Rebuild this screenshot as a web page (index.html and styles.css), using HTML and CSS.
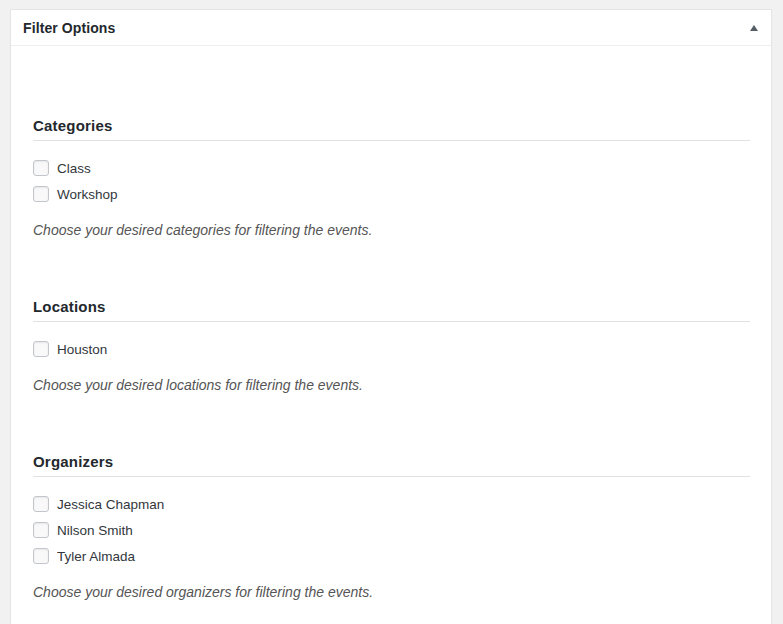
FILE: index.html
```html
<!DOCTYPE html>
<html>
<head>
<meta charset="utf-8">
<link rel="stylesheet" href="styles.css">
</head>
<body>
<div class="postbox">
  <div class="postbox-header">
    <h2 class="postbox-title">Filter Options</h2>
    <span class="toggle-arrow" aria-hidden="true"></span>
  </div>
  <div class="postbox-body">
    <section class="filter-group">
      <h3 class="group-title">Categories</h3>
      <ul class="check-list">
        <li><label><span class="checkbox"></span>Class</label></li>
        <li><label><span class="checkbox"></span>Workshop</label></li>
      </ul>
      <p class="description">Choose your desired categories for filtering the events.</p>
    </section>
    <section class="filter-group">
      <h3 class="group-title">Locations</h3>
      <ul class="check-list">
        <li><label><span class="checkbox"></span>Houston</label></li>
      </ul>
      <p class="description">Choose your desired locations for filtering the events.</p>
    </section>
    <section class="filter-group">
      <h3 class="group-title">Organizers</h3>
      <ul class="check-list">
        <li><label><span class="checkbox"></span>Jessica Chapman</label></li>
        <li><label><span class="checkbox"></span>Nilson Smith</label></li>
        <li><label><span class="checkbox"></span>Tyler Almada</label></li>
      </ul>
      <p class="description">Choose your desired organizers for filtering the events.</p>
    </section>
  </div>
</div>
</body>
</html>
```

FILE: styles.css
```css
html, body {
  margin: 0;
  padding: 0;
}
body {
  background: #f1f1f1;
  font-family: "Liberation Sans", Arial, sans-serif;
  color: #32373c;
  padding: 9px 11px 0 10px;
  height: 624px;
  box-sizing: border-box;
  overflow: hidden;
}
.postbox {
  background: #fff;
  border: 1px solid #e5e5e5;
  border-bottom: none;
  box-shadow: 0 1px 1px rgba(0,0,0,0.04);
  min-height: 700px;
}
.postbox-header {
  height: 35px;
  border-bottom: 1px solid #eeeeee;
  display: flex;
  align-items: center;
  justify-content: space-between;
  padding: 0 13px 0 12px;
}
.postbox-title {
  margin: 0;
  font-size: 14px;
  font-weight: bold;
  color: #23282d;
  line-height: 20px;
  padding-top: 1px;
  letter-spacing: 0.1px;
}
.toggle-arrow {
  width: 0;
  height: 0;
  border-left: 4px solid transparent;
  border-right: 4px solid transparent;
  border-bottom: 6px solid #555d66;
  margin-top: 1px;
}
.postbox-body {
  padding: 70px 21px 0 22px;
  display: flex;
  flex-direction: column;
  gap: 57px;
}
.filter-group {
  display: flex;
  flex-direction: column;
}
.group-title {
  margin: 0;
  font-size: 15px;
  font-weight: bold;
  color: #23282d;
  line-height: 20px;
  padding-bottom: 4px;
  border-bottom: 1px solid #e1e1e1;
  letter-spacing: 0.2px;
}
.check-list {
  list-style: none;
  margin: 14px 0 0;
  padding: 0;
}
.check-list li {
  height: 26px;
  display: flex;
  align-items: center;
}
.check-list label {
  display: flex;
  align-items: center;
  font-size: 13.5px;
  color: #32373c;
}
.checkbox {
  width: 14px;
  height: 14px;
  border: 1px solid #c3c7cb;
  border-radius: 3px;
  background: #f9f9f9;
  box-shadow: inset 0 1px 2px rgba(0,0,0,0.08);
  margin-right: 8px;
  flex: none;
}
.description {
  margin: 13px 0 0;
  font-size: 14px;
  font-style: italic;
  color: #555;
  line-height: 20px;
}
```
